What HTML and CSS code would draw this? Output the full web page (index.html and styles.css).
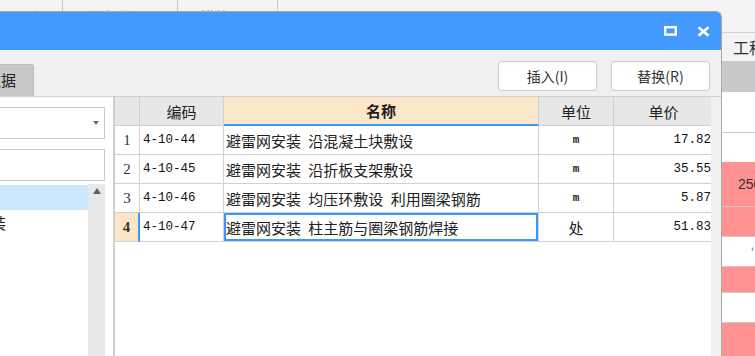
FILE: index.html
```html
<!DOCTYPE html>
<html>
<head>
<meta charset="utf-8">
<link rel="stylesheet" href="styles.css">
</head>
<body>
<div class="page">
  <div class="ptabs">
    <div class="ptab t1">工程</div>
    <div class="ptab t2">分部分项</div>
    <div class="ptab t3">措施项目</div>
  </div>
  <div class="ptable">
    <div class="prow ph">工程量</div>
    <div class="prow pg"></div>
    <div class="prow pw1"></div>
    <div class="prow pw2"></div>
    <div class="prow pp1"><span class="pnum">250</span></div>
    <div class="prow pp2"></div>
    <div class="prow pw3"><span class="pmark">'</span></div>
    <div class="prow pp3"></div>
    <div class="prow pw4"></div>
    <div class="prow pp4"></div>
  </div>
</div>

<div class="dialog">
  <div class="titlebar">
    <svg class="ico" width="13" height="10" viewBox="0 0 13 10"><rect x="1.2" y="1.2" width="10.6" height="7.4" fill="none" stroke="#fff" stroke-width="2.4"/></svg>
    <svg class="ico" width="13" height="11" viewBox="0 0 13 11"><path d="M1.5 1.2 L11.5 9.8 M11.5 1.2 L1.5 9.8" stroke="#fff" stroke-width="2.6" stroke-linecap="butt"/></svg>
  </div>
  <div class="toolbar">
    <div class="tab">数据</div>
    <div class="btns">
      <button class="btn">插入(I)</button>
      <button class="btn">替换(R)</button>
    </div>
  </div>
  <div class="main">
    <div class="left">
      <div class="dd"><span class="arrow-down"></span></div>
      <div class="inp"></div>
      <div class="list">
        <div class="items">
          <div class="item sel"><span class="itxt far">防雷及接地</span></div>
          <div class="item"><span class="itxt">避雷网安装</span></div>
        </div>
        <div class="sb"><span class="arrow-up"></span></div>
      </div>
    </div>
    <div class="grid">
      <div class="grow ghead">
        <div class="c rn"></div>
        <div class="c">编码</div>
        <div class="c hname">名称</div>
        <div class="c">单位</div>
        <div class="c">单价</div>
      </div>
      <div class="grow">
        <div class="c rn">1</div>
        <div class="c code">4-10-44</div>
        <div class="c name">避雷网安装 沿混凝土块敷设</div>
        <div class="c unit">m</div>
        <div class="c price">17.82</div>
      </div>
      <div class="grow">
        <div class="c rn">2</div>
        <div class="c code">4-10-45</div>
        <div class="c name">避雷网安装 沿折板支架敷设</div>
        <div class="c unit">m</div>
        <div class="c price">35.55</div>
      </div>
      <div class="grow">
        <div class="c rn">3</div>
        <div class="c code">4-10-46</div>
        <div class="c name">避雷网安装 均压环敷设 利用圈梁钢筋</div>
        <div class="c unit">m</div>
        <div class="c price">5.87</div>
      </div>
      <div class="grow">
        <div class="c rn cur">4</div>
        <div class="c code">4-10-47</div>
        <div class="c name selcell">避雷网安装 柱主筋与圈梁钢筋焊接</div>
        <div class="c unitcn">处</div>
        <div class="c price">51.83</div>
      </div>
    </div>
  </div>
</div>
</body>
</html>
```

FILE: styles.css
```css
* { box-sizing: border-box; }

body {
  margin: 0;
  width: 755px;
  height: 356px;
  overflow: hidden;
  position: relative;
  background: #f3f3f3;
  font-family: "Noto Sans CJK SC", "Noto Sans", sans-serif;
  color: #222;
}

/* background application */
.page { width: 755px; }
.ptabs {
  display: flex;
  height: 33px;
  border-bottom: 1px solid #cfcfcf;
  background: #f3f3f3;
}
.ptab {
  border-right: 1px solid #c8c8c8;
  font-size: 15px;
  line-height: 18px;
  padding-top: 8px;
  color: #999;
}
.t1 { width: 63px; padding-left: 16px; }
.t2 { width: 115px; padding-left: 25px; }
.t3 { width: 100px; padding-left: 22px; }

.ptable { margin-left: 722px; }
.prow {
  border-bottom: 1px solid #cbcbcb;
  font-size: 16px;
  padding-left: 11px;
  display: flex;
  align-items: center;
  white-space: nowrap;
  overflow: hidden;
}
.ph { height: 29px; background: #f3f3f3; color: #333; }
.pg { height: 30px; background: #c9c9c9; border-bottom: none; }
.pw1 { height: 41px; background: #fff; }
.pw2 { height: 29px; background: #fff; border-bottom: none; }
.pp1 { height: 45px; background: #ff9191; }
.pp2 { height: 30px; background: #ff9191; }
.pw3 { height: 30px; background: #fff; justify-content: flex-end; padding-right: 1px; }
.pp3 { height: 26px; background: #ff9191; }
.pw4 { height: 30px; background: #fff; }
.pp4 { height: 40px; background: #ff9191; }
.pnum { font-family: "Liberation Sans", sans-serif; font-size: 14px; color: #333; padding-left: 5px; }
.pmark { color: #b050d0; font-size: 12px; }

/* dialog window */
.dialog {
  position: absolute;
  top: 11px;
  left: 0;
  width: 722px;
  bottom: -10px;
  background: #f0f0f0;
  border-top: 1px solid #a9a9a9;
  border-right: 1px solid #a9a9a9;
  border-top-right-radius: 6px;
  overflow: hidden;
  display: flex;
  flex-direction: column;
}
.titlebar {
  height: 38px;
  flex: none;
  background: #4499ff;
  display: flex;
  justify-content: flex-end;
  align-items: center;
  gap: 20px;
  padding-right: 11px;
}
.ico { display: block; }

.toolbar {
  height: 47px;
  flex: none;
  display: flex;
  align-items: flex-end;
  border-bottom: 1px solid #d0d0d0;
}
.tab {
  margin-left: -17px;
  height: 32px;
  padding: 0 17px 0 2px;
  background: #c8c8c8;
  border: 1px solid #bdbdbd;
  border-bottom: none;
  border-top-right-radius: 3px;
  font-size: 15px;
  line-height: 30px;
  color: #222;
  white-space: nowrap;
}
.btns {
  margin-left: auto;
  align-self: flex-start;
  margin-top: 11px;
  margin-right: 11px;
  display: flex;
  gap: 14px;
}
.btn {
  width: 99px;
  height: 30px;
  background: #fff;
  border: 1px solid #cdcdcd;
  border-radius: 3px;
  font-family: "Noto Sans CJK SC", sans-serif;
  font-size: 14px;
  color: #333;
  padding: 0;
}

.main {
  flex: 1;
  display: flex;
}
.left {
  width: 113px;
  background: #fff;
  display: flex;
  flex-direction: column;
  overflow: hidden;
}
.dd {
  margin: 10px 0 0 -20px;
  width: 125px;
  height: 32px;
  border: 1px solid #c8c8c8;
  background: #fff;
  display: flex;
  justify-content: flex-end;
  align-items: center;
  padding-right: 5px;
}
.arrow-down {
  width: 0;
  height: 0;
  border-left: 3.5px solid transparent;
  border-right: 3.5px solid transparent;
  border-top: 4px solid #6e6e6e;
}
.inp {
  margin: 10px 0 0 -20px;
  width: 125px;
  height: 32px;
  border: 1px solid #c8c8c8;
  background: #fff;
}
.list {
  margin-top: 3px;
  flex: 1;
  display: flex;
}
.items { width: 88px; overflow: hidden; }
.item {
  height: 25px;
  font-size: 15px;
  line-height: 25px;
  white-space: nowrap;
}
.item.sel { margin-top: 1px; background: #cce8ff; }
.itxt { display: block; margin-left: -69px; color: #222; }
.itxt.far { margin-left: -120px; }
.sb {
  width: 17px;
  background: #e8e8e8;
  display: flex;
  justify-content: center;
  align-items: flex-start;
  padding-top: 4px;
}
.arrow-up {
  width: 0;
  height: 0;
  border-left: 4.5px solid transparent;
  border-right: 4.5px solid transparent;
  border-bottom: 6px solid #5f5f5f;
}

.grid {
  width: 598px;
  border-left: 2px solid #cfcfcf;
  background: #fff;
  overflow: hidden;
}
.grow {
  display: grid;
  grid-template-columns: 25px 84px 315px 75px 100px;
  height: 29px;
  width: 599px;
}
.c {
  border-right: 1px solid #d0d0d0;
  border-bottom: 1px solid #d0d0d0;
  display: flex;
  align-items: center;
  justify-content: center;
  font-size: 15px;
  color: #222;
  white-space: nowrap;
  overflow: hidden;
}
.ghead .c { background: #e7e7e7; }
.ghead .hname {
  background: #fde7ca;
  font-weight: bold;
  border-bottom: 2px solid #3d95ff;
}
.rn {
  font-family: "Liberation Serif", serif;
  font-size: 15px;
  color: #333;
}
.rn.cur {
  background: #fde6c8;
  font-weight: bold;
  border-right: 2px solid #3d95ff;
}
.code {
  justify-content: flex-start;
  padding-left: 3px;
  font-family: "Liberation Mono", monospace;
  font-size: 12.5px;
  color: #111;
}
.name {
  justify-content: flex-start;
  padding-left: 2px;
  word-spacing: 4px;
}
.selcell {
  box-shadow: inset 0 0 0 2px #3d95ff;
}
.unit {
  font-family: "Liberation Mono", monospace;
  font-size: 11px;
  font-weight: bold;
}
.unitcn { font-size: 15px; }
.price {
  justify-content: flex-end;
  padding-right: 2px;
  font-family: "Liberation Mono", monospace;
  font-size: 12.5px;
  color: #111;
}
```
